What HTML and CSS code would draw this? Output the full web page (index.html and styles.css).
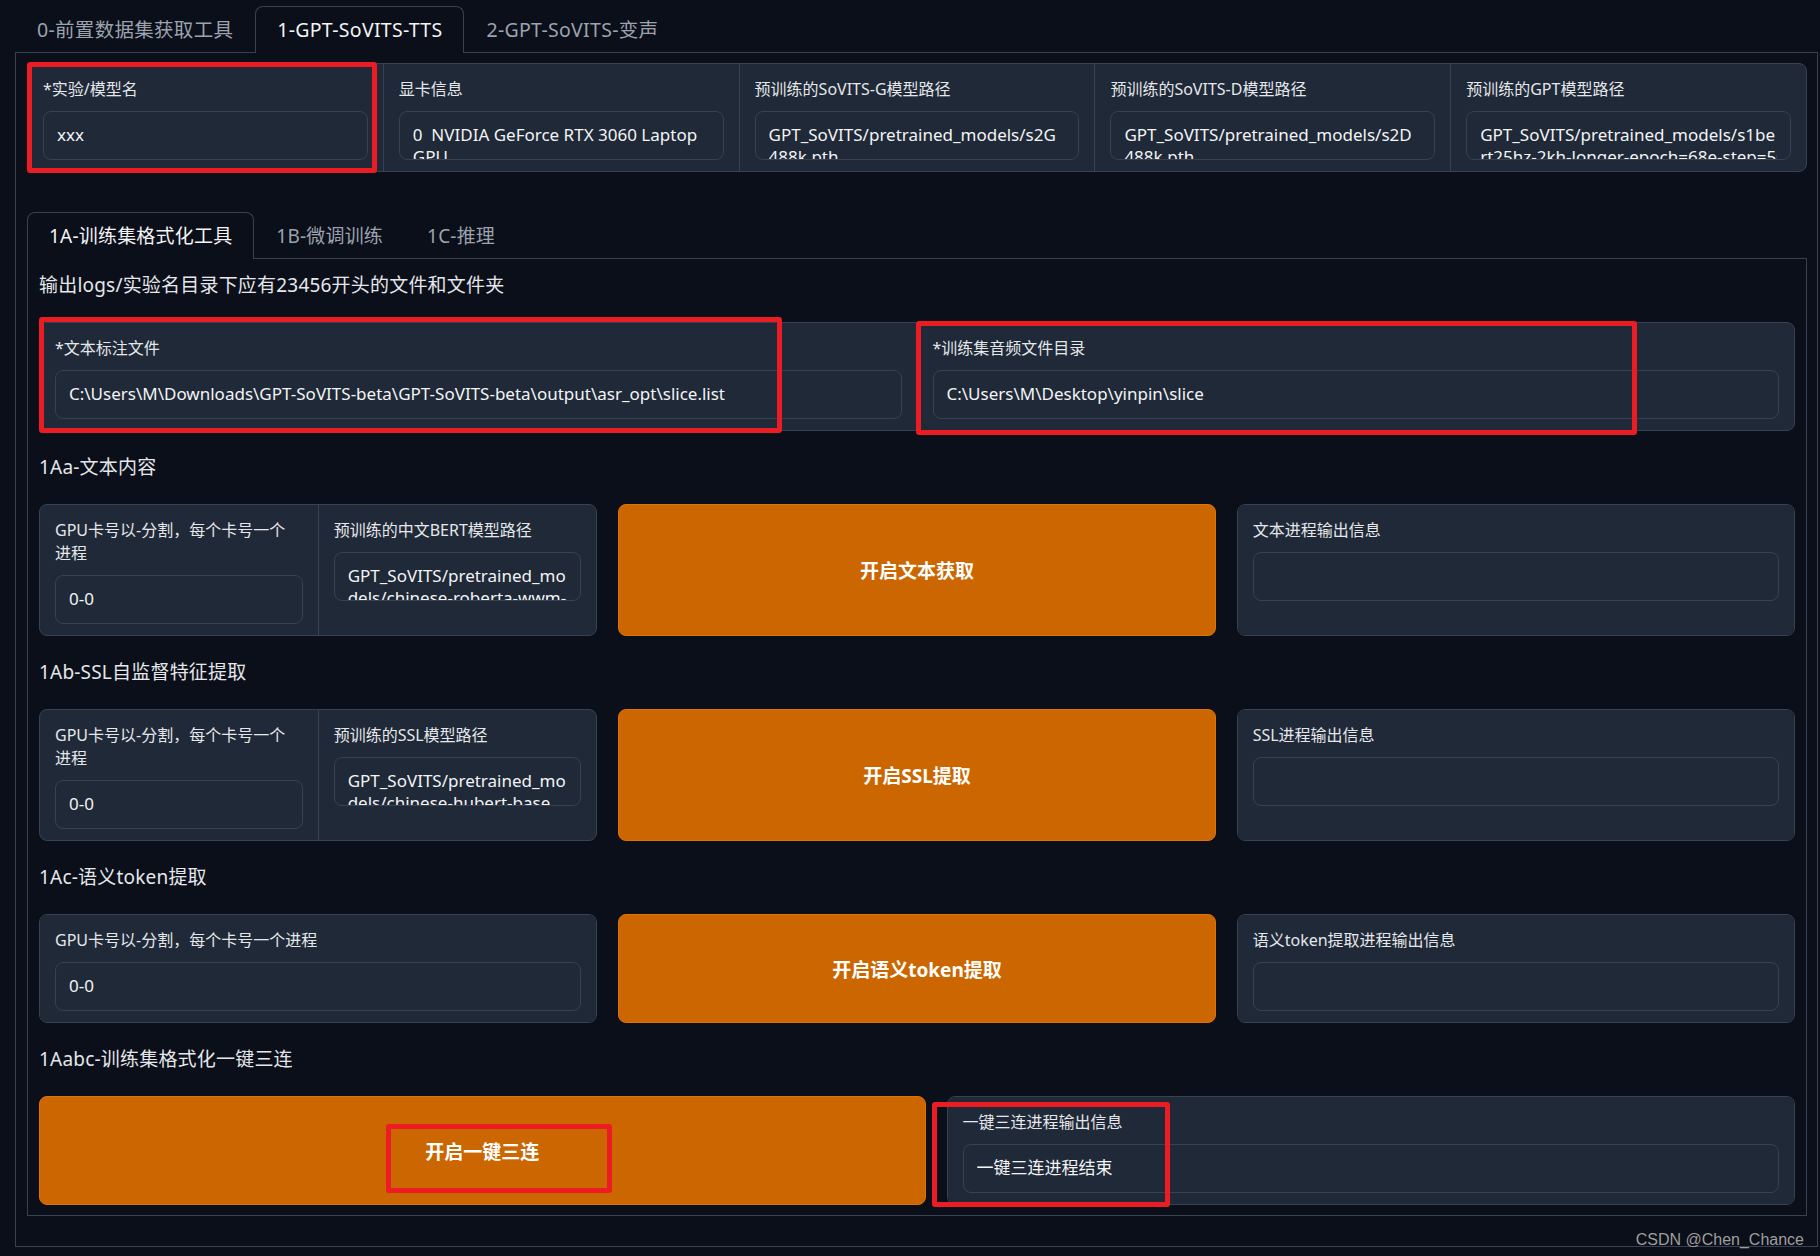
FILE: index.html
```html
<!DOCTYPE html>
<html>
<head>
    <title>GPT-SoVITS WebUI</title>
    <meta charset="utf-8">
    <link rel="stylesheet" href="styles.css">
</head>
<body>
    <div class="app">
        <nav class="tabs">
            <button class="tab">0-前置数据集获取工具</button>
            <button class="tab active">1-GPT-SoVITS-TTS</button>
            <button class="tab">2-GPT-SoVITS-变声</button>
        </nav>

        <div class="panel outer">
            <div class="group">
                <div class="field">
                    <label>*实验/模型名</label>
                    <div class="box"><span>xxx</span></div>
                </div>
                <div class="field">
                    <label>显卡信息</label>
                    <div class="box"><span>0  NVIDIA GeForce RTX 3060 Laptop</span><span>GPU</span></div>
                </div>
                <div class="field">
                    <label>预训练的SoVITS-G模型路径</label>
                    <div class="box"><span>GPT_SoVITS/pretrained_models/s2G</span><span>488k.pth</span></div>
                </div>
                <div class="field">
                    <label>预训练的SoVITS-D模型路径</label>
                    <div class="box"><span>GPT_SoVITS/pretrained_models/s2D</span><span>488k.pth</span></div>
                </div>
                <div class="field">
                    <label>预训练的GPT模型路径</label>
                    <div class="box"><span>GPT_SoVITS/pretrained_models/s1be</span><span>rt25hz-2kh-longer-epoch=68e-step=50232.ckpt</span></div>
                </div>
            </div>

            <nav class="tabs sub-tabs">
                <button class="tab active">1A-训练集格式化工具</button>
                <button class="tab">1B-微调训练</button>
                <button class="tab">1C-推理</button>
            </nav>

            <div class="panel inner">
                <p class="md">输出logs/实验名目录下应有23456开头的文件和文件夹</p>

                <div class="group">
                    <div class="field">
                        <label>*文本标注文件</label>
                        <div class="box"><span>C:\Users\M\Downloads\GPT-SoVITS-beta\GPT-SoVITS-beta\output\asr_opt\slice.list</span></div>
                    </div>
                    <div class="field">
                        <label>*训练集音频文件目录</label>
                        <div class="box"><span>C:\Users\M\Desktop\yinpin\slice</span></div>
                    </div>
                </div>

                <p class="md">1Aa-文本内容</p>
                <div class="row row-three">
                    <div class="group">
                        <div class="field">
                            <label>GPU卡号以-分割，每个卡号一个<br>进程</label>
                            <div class="box"><span>0-0</span></div>
                        </div>
                        <div class="field">
                            <label>预训练的中文BERT模型路径</label>
                            <div class="box"><span>GPT_SoVITS/pretrained_mo</span><span>dels/chinese-roberta-wwm-ext-large</span></div>
                        </div>
                    </div>
                    <button class="primary">开启文本获取</button>
                    <div class="group">
                        <div class="field">
                            <label>文本进程输出信息</label>
                            <div class="box"></div>
                        </div>
                    </div>
                </div>

                <p class="md">1Ab-SSL自监督特征提取</p>
                <div class="row row-three">
                    <div class="group">
                        <div class="field">
                            <label>GPU卡号以-分割，每个卡号一个<br>进程</label>
                            <div class="box"><span>0-0</span></div>
                        </div>
                        <div class="field">
                            <label>预训练的SSL模型路径</label>
                            <div class="box"><span>GPT_SoVITS/pretrained_mo</span><span>dels/chinese-hubert-base</span></div>
                        </div>
                    </div>
                    <button class="primary">开启SSL提取</button>
                    <div class="group">
                        <div class="field">
                            <label>SSL进程输出信息</label>
                            <div class="box"></div>
                        </div>
                    </div>
                </div>

                <p class="md">1Ac-语义token提取</p>
                <div class="row row-three">
                    <div class="group">
                        <div class="field">
                            <label>GPU卡号以-分割，每个卡号一个进程</label>
                            <div class="box"><span>0-0</span></div>
                        </div>
                    </div>
                    <button class="primary">开启语义token提取</button>
                    <div class="group">
                        <div class="field">
                            <label>语义token提取进程输出信息</label>
                            <div class="box"></div>
                        </div>
                    </div>
                </div>

                <p class="md">1Aabc-训练集格式化一键三连</p>
                <div class="row row-two">
                    <button class="primary">开启一键三连</button>
                    <div class="group">
                        <div class="field">
                            <label>一键三连进程输出信息</label>
                            <div class="box"><span>一键三连进程结束</span></div>
                        </div>
                    </div>
                </div>
            </div>

            <div class="watermark">CSDN @Chen_Chance</div>
        </div>
    </div>

    <!-- red annotation frames drawn over the screenshot -->
    <div class="mark mark-name"></div>
    <div class="mark mark-list"></div>
    <div class="mark mark-wav"></div>
    <div class="mark mark-btn"></div>
    <div class="mark mark-out"></div>
</body>
</html>
```

FILE: styles.css
```css
body {
    margin: 0;
    background: #0b0f19;
    color: #d1d5db;
    font-family: "Noto Sans", "Noto Sans CJK SC", sans-serif;
    min-height: 1256px;
}
.app {
    padding: 6px 2px 0 15px;
}
.tabs {
    display: flex;
    border-bottom: 1px solid #374151;
}
.tab {
    height: 47px;
    margin-bottom: -1px;
    padding: 0 21px;
    background: none;
    border: 1px solid transparent;
    border-bottom: none;
    border-radius: 8px 8px 0 0;
    color: #9ca3af;
    font-family: inherit;
    font-size: 19.5px;
    letter-spacing: 0.3px;
    line-height: 44px;
}
.tab.active {
    background: #0b0f19;
    border-color: #374151;
    color: #f3f4f6;
}
.sub-tabs .tab {
    font-size: 19px;
    letter-spacing: 0.2px;
}
.panel {
    border: 1px solid #374151;
    border-top: none;
}
.outer {
    position: relative;
    padding: 10px 10px 30px 11px;
}
.sub-tabs {
    margin-top: 40px;
}
.inner {
    display: flex;
    flex-direction: column;
    gap: 21px;
    padding: 11px 11px 10px 11px;
}
.md {
    margin: 0;
    font-size: 19px;
    line-height: 31px;
    letter-spacing: 0.2px;
    color: #e5e7eb;
}
.group {
    display: flex;
    gap: 1px;
    background: #374151;
    border: 1px solid #374151;
    border-radius: 8px;
    overflow: hidden;
}
.field {
    flex: 1;
    min-width: 0;
    background: #1f2937;
    padding: 14px 15px 11px;
}
.field label {
    display: block;
    margin-bottom: 10px;
    font-size: 16px;
    line-height: 23px;
    color: #e5e7eb;
}
.box {
    height: 49px;
    box-sizing: border-box;
    padding: 12px 13px 0;
    background: #1f2937;
    border: 1px solid #374151;
    border-radius: 8px;
    overflow: hidden;
    font-size: 17px;
    line-height: 22px;
    color: #f3f4f6;
}
.box span {
    display: block;
    white-space: pre;
    overflow: hidden;
}
.row {
    display: grid;
    gap: 21px;
}
.row-three {
    grid-template-columns: 558fr 597fr 558fr;
}
.row-two {
    grid-template-columns: 886fr 848fr;
}
.primary {
    background: #cc6600;
    border: 1px solid #e07200;
    border-radius: 8px;
    color: #fff;
    font-family: inherit;
    font-size: 19px;
    font-weight: bold;
}
.watermark {
    position: absolute;
    right: 13px;
    bottom: -3px;
    font-family: "Liberation Sans", Arial, sans-serif;
    font-size: 16px;
    color: #9e9e9e;
}
.mark {
    position: absolute;
    box-sizing: border-box;
    border: 5px solid #ec1c24;
    border-radius: 3px;
}
.mark-name {
    left: 27px;
    top: 62px;
    width: 350px;
    height: 111px;
}
.mark-list {
    left: 39px;
    top: 317px;
    width: 743px;
    height: 116px;
}
.mark-wav {
    left: 916px;
    top: 321px;
    width: 721px;
    height: 114px;
}
.mark-btn {
    left: 386px;
    top: 1124px;
    width: 226px;
    height: 69px;
}
.mark-out {
    left: 932px;
    top: 1102px;
    width: 238px;
    height: 105px;
}
```
